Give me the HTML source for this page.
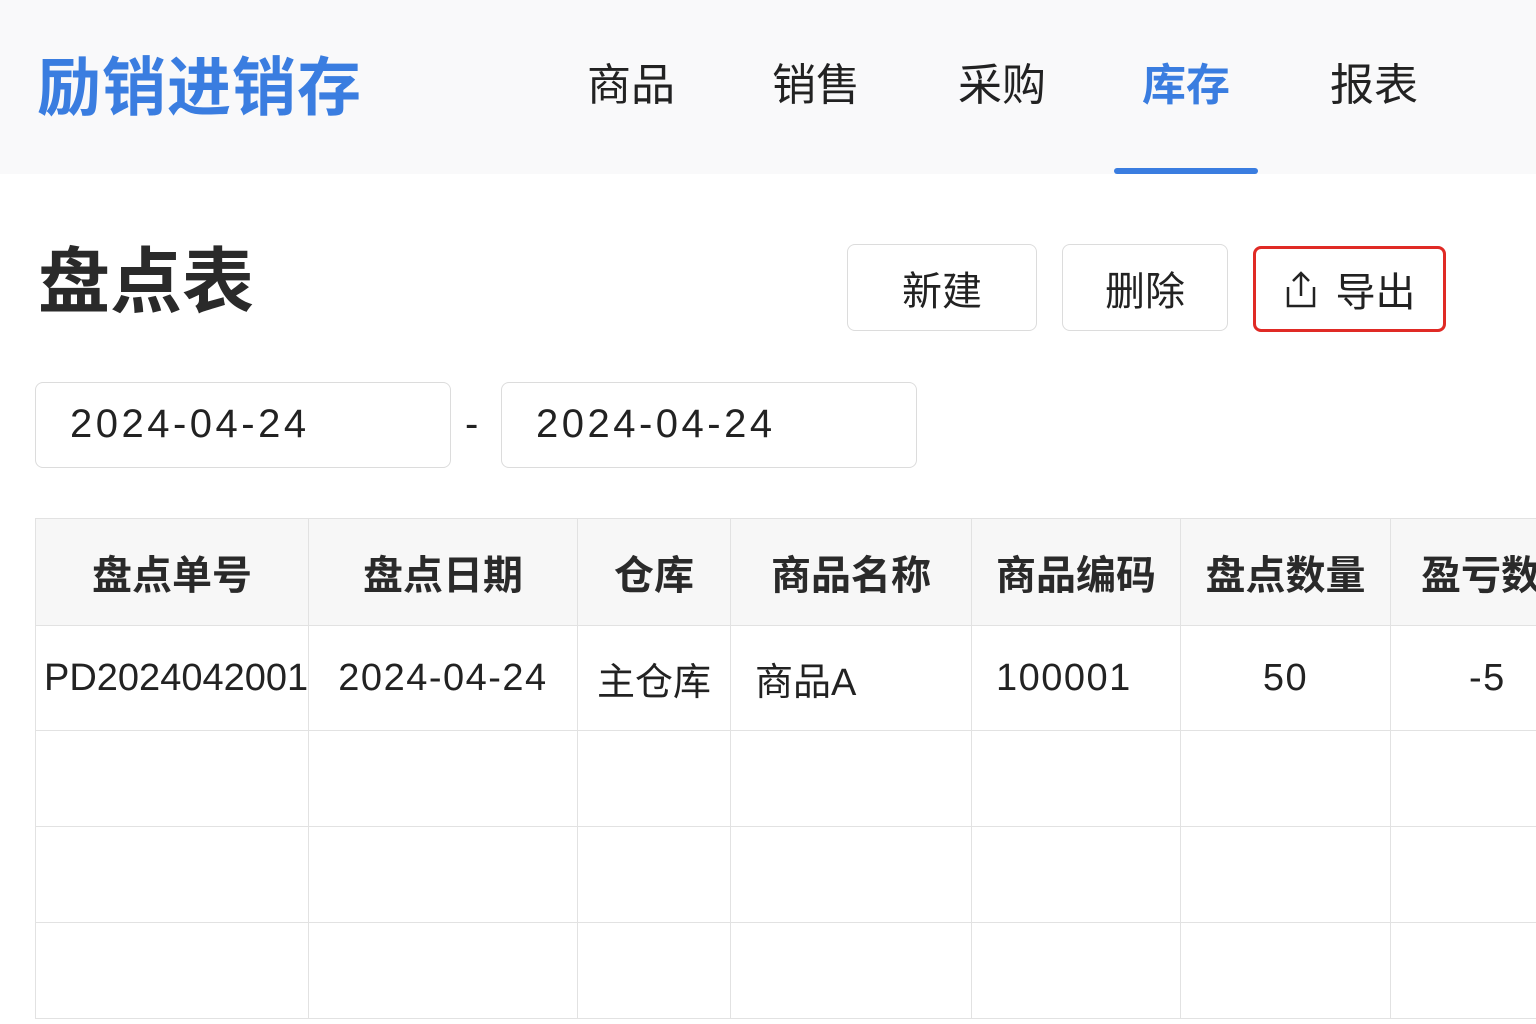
<!DOCTYPE html>
<html><head><meta charset="utf-8"><style>
*{margin:0;padding:0;box-sizing:border-box}
body{width:1536px;height:1024px;overflow:hidden;background:#fff;position:relative;font-family:"Liberation Sans","Noto Sans CJK SC",sans-serif;color:#222}
.a{position:absolute;white-space:nowrap}
.hdr{left:0;top:0;width:1536px;height:174px;background:#f9f9fa}
.logo{left:37px;top:46px;font-size:64px;font-weight:bold;color:#3a7de0;letter-spacing:1px;line-height:84px}
.nav{top:58px;font-size:44px;line-height:56px;color:#222;transform:translateX(-50%)}
.btn{border:1.5px solid #dcdcdc;border-radius:8px;background:#fff;font-size:40px;display:flex;align-items:center;justify-content:center;color:#222}
.inp{border:1.5px solid #dcdcdc;border-radius:8px;font-size:40px;line-height:82px;padding-left:34px;color:#222;letter-spacing:3.5px}
table{position:absolute;left:35px;top:518px;border-collapse:collapse;table-layout:fixed;width:1600px}
td,th{border:1.5px solid #e2e2e2;font-size:38px;text-align:center;overflow:hidden;white-space:nowrap}
th{background:#f7f7f7;height:107px;font-weight:bold;color:#2a2a2a;font-size:40px}
td{height:96px;color:#222}
.n{letter-spacing:1.5px}
</style></head><body>
<div class="a hdr"></div>
<div class="a logo">励销进销存</div>
<div class="a nav" style="left:631px">商品</div>
<div class="a nav" style="left:816px">销售</div>
<div class="a nav" style="left:1002px">采购</div>
<div class="a nav" style="left:1186px;color:#3a7de0;font-weight:bold">库存</div>
<div class="a nav" style="left:1374px">报表</div>
<div class="a" style="left:1114px;top:168px;width:144px;height:6px;border-radius:3px;background:#3a7de0"></div>
<div class="a" style="left:38px;top:238px;font-size:72px;font-weight:bold;line-height:90px;color:#2a2a2a">盘点表</div>
<div class="a btn" style="left:847px;top:244px;width:190px;height:87px">新建</div>
<div class="a btn" style="left:1062px;top:244px;width:166px;height:87px">删除</div>
<div class="a btn" style="left:1253px;top:246px;width:193px;height:86px;border:3px solid #e02a25;border-radius:8px">
<svg width="34" height="40" viewBox="0 0 34 40" style="margin-right:18px"><path d="M17 4V27M9 12L17 4L25 12M4 18V37H30V18" fill="none" stroke="#222" stroke-width="2.5"/></svg>导出</div>
<div class="a inp" style="left:35px;top:382px;width:416px;height:86px">2024-04-24</div>
<div class="a" style="left:465px;top:400px;font-size:40px;line-height:48px">-</div>
<div class="a inp" style="left:501px;top:382px;width:416px;height:86px">2024-04-24</div>
<table>
<colgroup><col style="width:273px"><col style="width:269px"><col style="width:153px"><col style="width:241px"><col style="width:209px"><col style="width:210px"><col style="width:245px"></colgroup>
<tr><th>盘点单号</th><th>盘点日期</th><th>仓库</th><th>商品名称</th><th style="text-align:left;padding-left:24px">商品编码</th><th>盘点数量</th><th style="text-align:left;padding-left:30px">盈亏数量</th></tr>
<tr style="height:105px"><td style="height:105px;text-align:left;padding-left:8px">PD2024042001</td><td class="n">2024-04-24</td><td>主仓库</td><td style="text-align:left;padding-left:24px">商品A</td><td class="n" style="text-align:left;padding-left:24px">100001</td><td class="n">50</td><td class="n" style="text-align:left;padding-left:78px">-5</td></tr>
<tr><td></td><td></td><td></td><td></td><td></td><td></td><td></td></tr>
<tr><td></td><td></td><td></td><td></td><td></td><td></td><td></td></tr>
<tr><td></td><td></td><td></td><td></td><td></td><td></td><td></td></tr>
</table>
</body></html>
